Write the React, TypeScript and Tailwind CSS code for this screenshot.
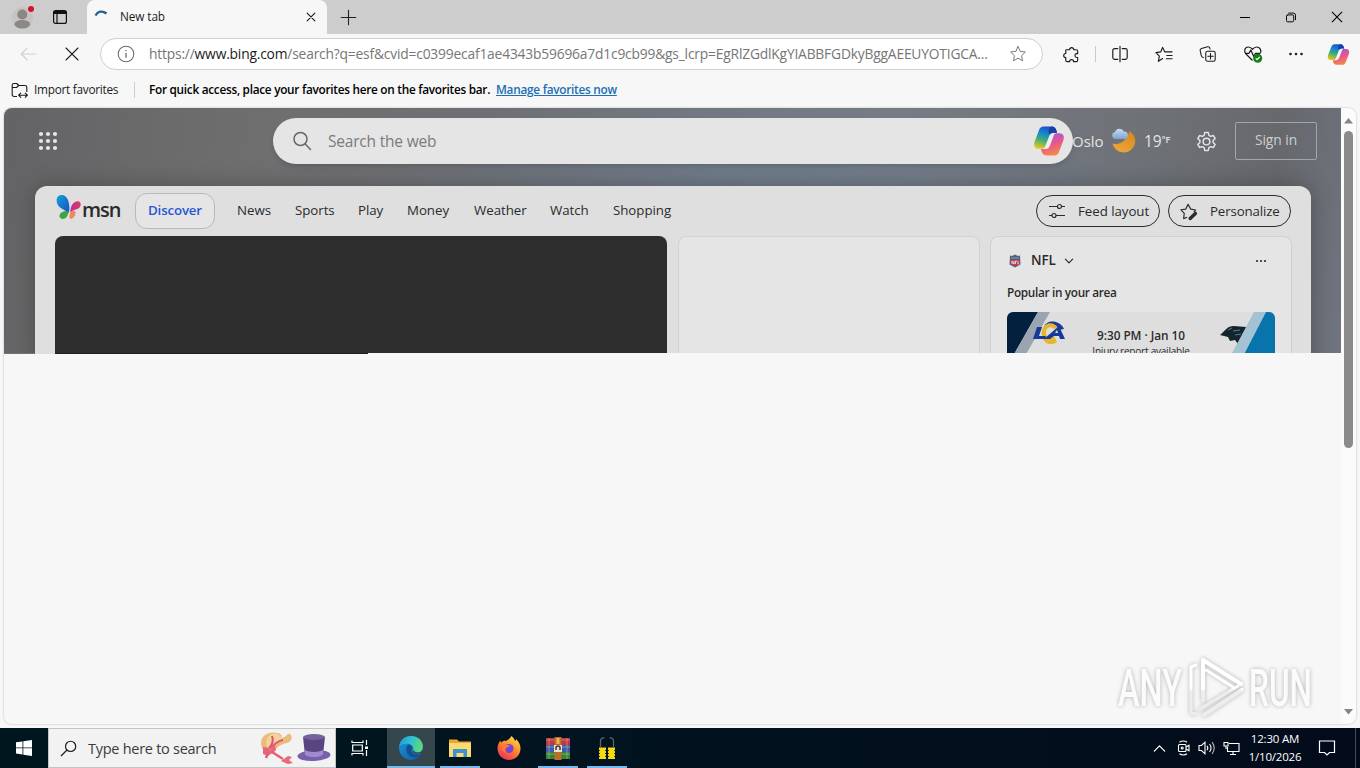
import type { ReactNode } from "react";

type IconProps = { d: string; size?: number; className?: string; width?: number };

// 20x20 outline icon
function Icon({ d, size = 20, className = "", width = 1.1 }: IconProps) {
    return (
        <svg
            width={size}
            height={size}
            viewBox="0 0 20 20"
            fill="none"
            stroke="currentColor"
            strokeWidth={width}
            strokeLinecap="round"
            strokeLinejoin="round"
            className={`shrink-0 ${className}`}
        >
            <path d={d} />
        </svg>
    );
}

const STAR = "M10 1.800l2.500 5.200 5.700.8-4.200 4 1 5.700-5-2.800-5 2.800 1-5.700-4.200-4 5.700-.8z";

function Copilot({ id, size, gap }: { id: string; size: number; gap: string }) {
    const ribbon =
        "M18 6C17.400 2.700 16 1.200 14.2 1.2H8C6.200 1.200 5 2.400 4.400 4.200L1.200 12.500C.2 15.500 1.300 17.800 4 17.800h3.400c1.900 0 2.700-1.100 3.300-2.900L13.300 8c.5-1.400 1.200-2 2.600-2z";
    return (
        <svg width={size} height={size} viewBox="0 0 24 24" className="shrink-0">
            <defs>
                <linearGradient id={`${id}a`} x1="0.6" y1="0" x2="0.3" y2="1">
                    <stop offset="0" stopColor="#1b50c4" />
                    <stop offset="0.3" stopColor="#1581d0" />
                    <stop offset="0.62" stopColor="#3fae78" />
                    <stop offset="1" stopColor="#e9c61c" />
                </linearGradient>
                <linearGradient id={`${id}b`} x1="0.7" y1="1" x2="0.4" y2="0">
                    <stop offset="0" stopColor="#9a5be0" />
                    <stop offset="0.5" stopColor="#e8578a" />
                    <stop offset="1" stopColor="#f58b45" />
                </linearGradient>
            </defs>
            <path d={ribbon} fill={`url(#${id}a)`} />
            <path d={ribbon} fill={`url(#${id}b)`} transform="rotate(180 12 12)" />
            <path d="M13 7.500c.5-1.200 1.300-1.700 2.600-1.700H18c-.6-3-1.700-4.600-3.800-4.600-1.300 0-2.200 1.800-2.700 4z" fill="#173fa8" />
            <path d="M11.900 9C12.500 7 13.500 6 15.500 6h2.300C16 6.300 15.700 7.300 15.200 8.800L12.700 15.500C12 17.300 11 18 9 18H6.500c1.800-.3 2.400-1.200 2.900-2.600z" fill={gap} />
        </svg>
    );
}

function TitleBar() {
    return (
        <div className="h-[34px] shrink-0 bg-[#cdcdcd] flex items-stretch">
            <div className="w-[87px] flex items-center pl-3 bg-[#cdcdcd]">
                <svg width="22" height="26" viewBox="0 0 22 26">
                    <circle cx="10.500" cy="13.500" r="10.500" fill="#c6c3c0" />
                    <circle cx="10.300" cy="10.500" r="5" fill="#8b8784" />
                    <ellipse cx="10.300" cy="20.200" rx="7.800" ry="4.200" fill="#8b8784" />
                    <circle cx="19" cy="5" r="3" fill="#d3122b" />
                </svg>
                <svg width="16" height="16" viewBox="0 0 16 16" fill="none" stroke="#111" strokeWidth="1.2" className="ml-[18px]">
                    <rect x="1.600" y="1.600" width="12.800" height="12.800" rx="2" />
                    <path d="M1.600 3.500h12.800" strokeWidth="3" />
                    <path d="M5 4v10.400" />
                </svg>
            </div>
            <div className="w-[240px] bg-[#f7f7f7] rounded-t-lg flex items-center">
                <svg width="16" height="16" viewBox="0 0 16 16" fill="none" className="ml-[6px]">
                    <path d="M2.500 6.500C4.600 2.500 9 1 13.500 4.500" stroke="#1f5f97" strokeWidth="2.300" />
                </svg>
                <span className="ml-[11px] text-[11.8px] text-[#1c1c1c] w-[180px] tracking-[-0.1px]">New tab</span>
                <Icon d="M4.500 4.500l11 11M15.500 4.500l-11 11" size={14} width={1.7} className="ml-1 text-[#222]" />
            </div>
            <div className="w-[43px] flex items-center justify-center">
                <Icon d="M10 1.500v17M1.500 10h17" size={17} width={1.3} className="text-[#222]" />
            </div>
            <div className="ml-auto flex text-black">
                <div className="w-[46px] flex items-center justify-center">
                    <div className="w-[10px] h-px bg-black" />
                </div>
                <div className="w-[46px] flex items-center justify-center">
                    <Icon d="M5 6.500h7.500a2 2 0 0 1 2 2V16a2 2 0 0 1-2 2H4.500a2 2 0 0 1-2-2V8.500a2 2 0 0 1 2-2zM6 3.500h8a3.500 3.500 0 0 1 3.500 3.500v7.500" size={12} width={1.6} />
                </div>
                <div className="w-[46px] flex items-center justify-center">
                    <Icon d="M2 2l16 16M18 2L2 18" size={12} width={1.8} />
                </div>
            </div>
        </div>
    );
}

function ToolCell({ children }: { children: ReactNode }) {
    return <div className="w-11 flex items-center justify-center text-[#1b1b1b]">{children}</div>;
}

function Toolbar() {
    return (
        <div className="h-10 shrink-0 flex items-center">
            <div className="w-[56px] flex justify-center">
                <Icon d="M18 10H2.500M9 3.500L2.500 10 9 16.500" size={18} className="text-[#cfcfcf]" width={1.3} />
            </div>
            <div className="w-[32px] flex justify-center">
                <Icon d="M4 4l12 12M16 4L4 16" size={20} className="text-[#222]" width={1.1} />
            </div>
            <div className="ml-3 w-[943px] h-8 rounded-full bg-white border border-[#cfcfcf] flex items-center">
                <svg width="18" height="18" viewBox="0 0 18 18" fill="none" stroke="#6e6e6e" strokeWidth="1.100" className="ml-4 shrink-0">
                    <circle cx="9" cy="9" r="7.800" />
                    <path d="M9 8v4.800M9 5v1.300" strokeWidth="1.300" />
                </svg>
                <div className="ml-[14px] w-[846px] pt-px whitespace-nowrap text-[13.8px] tracking-[-0.182px] text-[#767676]">
                    https://<span className="text-[#1b1b1b]">www.bing.com</span>/search?q=esf&amp;cvid=c0399ecaf1ae4343b59696a7d1c9cb99&amp;gs_lcrp=EgRlZGdlKgYIABBFGDkyBggAEEUYOTIGCA...
                </div>
                <Icon d={STAR} size={18} className="ml-[14px] text-[#777]" />
            </div>
            <div className="ml-[6px] flex items-center">
                <ToolCell>
                    <Icon d="M4.500 5H8a2.200 2.200 0 1 1 4.400 0H15a1.500 1.500 0 0 1 1.500 1.500v2.600h-.9a2 2 0 1 0 0 4h.9V16a1.500 1.500 0 0 1-1.500 1.500h-2.800a2.100 2.100 0 0 0-4.200 0H5.500A1.500 1.500 0 0 1 4 16v-2.700a2.200 2.200 0 1 1 0-4.400V5.500z" size={19} width={1.2} className="ml-px" />
                </ToolCell>
                <div className="ml-[2px] mr-[2px] w-px h-4 bg-[#c9c9c9]" />
                <ToolCell>
                    <Icon d="M10 1.500v17M7.500 4H4a2 2 0 0 0-2 2v8a2 2 0 0 0 2 2h3.500M12.500 4H16a2 2 0 0 1 2 2v8a2 2 0 0 1-2 2h-3.500" size={18} width={1.3} />
                </ToolCell>
                <ToolCell>
                    <Icon d="M8 14.300l-4.500 2.900 1.100-5.400L1 8l5-.7L8 2.500l2.200 4.700H18M12.500 11H18M12 14.500h6" size={19} width={1.2} />
                </ToolCell>
                <ToolCell>
                    <Icon d="M7.500 9a2 2 0 0 1 2-2H16a2 2 0 0 1 2 2v7a2 2 0 0 1-2 2H9.500a2 2 0 0 1-2-2zM12.800 9.500v6M9.800 12.500h6M5 13.800L4 13.500C3 13 2.800 12.600 2.500 11.500L1.300 6.300C1 5 1.500 4.200 2.800 3.800L9.500 2c1.300-.3 2.200.2 2.600 1.500l.3.900" size={18} width={1.2} />
                </ToolCell>
                <ToolCell>
                    <svg width="20" height="20" viewBox="0 0 20 20" fill="none" stroke="currentColor" strokeWidth="1.200" strokeLinejoin="round" className="ml-[2px]">
                        <path d="M9.500 16.500L3 10C.5 7.200 1.700 3 5.300 3c2 0 3.300 1 4.200 2.300C10.500 4 11.800 3 13.700 3c3.200 0 4.800 3 3.800 5.800" />
                        <path d="M2 9.300h4L7.800 6l3 6.500 1.700-3.200h5" />
                        <circle cx="14.700" cy="14.200" r="4.500" fill="#16801d" stroke="none" />
                        <path d="M12.700 14.300l1.400 1.400 2.600-2.800" stroke="#fff" />
                    </svg>
                </ToolCell>
                <ToolCell>
                    <svg width="16" height="4" viewBox="0 0 16 4" fill="currentColor">
                        <circle cx="2.500" cy="2" r="1.300" />
                        <circle cx="8" cy="2" r="1.300" />
                        <circle cx="13.500" cy="2" r="1.300" />
                    </svg>
                </ToolCell>
                <div className="w-10 flex justify-center">
                    <Copilot id="tool" size={23} gap="#f7f7f7" />
                </div>
            </div>
        </div>
    );
}

function FavoritesBar() {
    return (
        <div className="h-[34px] shrink-0 flex items-center pb-[2px] text-[11.8px] text-[#1b1b1b] whitespace-nowrap">
            <svg width="17" height="17" viewBox="0 0 17 17" fill="none" stroke="#1b1b1b" strokeWidth="1.100" strokeLinejoin="round" className="ml-[11px] shrink-0">
                <path d="M6 14.500H3a1.800 1.800 0 0 1-1.800-1.800V3.300c0-1 .8-1.800 1.800-1.800h2.800l2 2H14c1 0 1.800.8 1.800 1.800V10M1.200 5.500h4.300l2.300-2" />
                <path d="M7.500 13.200h9M10 10.800l-2.400 2.400 2.400 2.400M14 10.800l2.400 2.400L14 15.600" />
            </svg>
            <span className="ml-[6px] w-[100px] tracking-[-0.26px]">Import favorites</span>
            <div className="w-px h-4 bg-[#cfcfcf]" />
            <span className="ml-[14px] w-[347px] font-semibold tracking-[-0.275px] text-black">
                For quick access, place your favorites here on the favorites bar.
            </span>
            <span className="font-semibold tracking-[-0.26px] text-[#1a6fb5] underline">Manage favorites now</span>
        </div>
    );
}

function PageHeader() {
    return (
        <div className="h-[66px] flex items-center text-[#e4e4e4]">
            <svg width="20" height="20" viewBox="0 0 20 20" fill="#e6e6e6" className="ml-[34px]">
                {[3, 10, 17].map((y) =>
                    [3, 10, 17].map((x) => <circle key={`${x}-${y}`} cx={x} cy={y} r="2.100" />)
                )}
            </svg>
            <div className="ml-[215px] w-[800px] h-[46px] shrink-0 rounded-full bg-[#e5e5e5] shadow-md flex items-center">
                <Icon d="M8.500 1.500a6.500 6.500 0 1 1 0 13 6.500 6.500 0 0 1 0-13zM13.200 13l5.300 5.500" size={20} width={1.5} className="ml-[19px] text-[#666]" />
                <span className="ml-4 w-[705px] pt-[2px] text-[15.5px] tracking-[-0.2px] text-[#7b7b7b]">Search the web</span>
                <Copilot id="search" size={32} gap="#eeeeee" />
            </div>
            <span className="w-[39px] shrink-0 text-[15px] whitespace-nowrap ml-[-1px]">Oslo</span>
            <svg width="26" height="26" viewBox="0 0 26 26" className="shrink-0">
                <defs>
                    <linearGradient id="moon" x1="0.800" y1="0" x2="0.300" y2="1">
                        <stop offset="0" stopColor="#d9861c" />
                        <stop offset="1" stopColor="#eba738" />
                    </linearGradient>
                    <linearGradient id="cloud" x1="0" y1="0" x2="0" y2="1">
                        <stop offset="0" stopColor="#c8dcf2" />
                        <stop offset="1" stopColor="#7ea4d1" />
                    </linearGradient>
                </defs>
                <path d="M18.500 3A11.500 11.500 0 1 1 1.500 15.500C9 18 16 12 18.500 3z" fill="url(#moon)" />
                <path d="M4.500 11a3.500 3.500 0 0 1-.6-6.900A5 5 0 0 1 13 3.500a3.800 3.800 0 0 1 1 7.500z" fill="url(#cloud)" />
            </svg>
            <span className="ml-[7px] w-[30px] pt-px flex items-start whitespace-nowrap text-[15.5px]">
                19<span className="text-[9px] font-semibold mt-[3px] tracking-[-0.2px]">°F</span>
            </span>
            <Icon
                d="M10 6.800a3.200 3.200 0 1 1 0 6.400 3.200 3.200 0 0 1 0-6.400zM8.300 1.500h3.400l.6 2.600 1.700 1 2.600-.8 1.700 2.900-2 1.900v1.800l2 1.900-1.700 2.900-2.600-.8-1.700 1-.6 2.600H8.300l-.6-2.600-1.700-1-2.600.8-1.700-2.900 2-1.900V9.100l-2-1.900 1.700-2.900 2.600.8 1.700-1z"
                size={21}
                width={1.4}
                className="ml-[22px]"
            />
            <div className="ml-[18px] w-[82px] h-[38px] shrink-0 border border-[#a2a5a9] rounded-[2px] flex items-center justify-center text-[13.8px] tracking-[-0.05px] pb-px whitespace-nowrap text-[#cfcfcf]">
                Sign in
            </div>
        </div>
    );
}

function MsnLogo() {
    return (
        <div className="w-[66px] flex items-start">
            <svg width="26" height="26" viewBox="0 0 26 26">
                <defs>
                    <linearGradient id="wingBlue" x1="0" y1="0" x2="1" y2="1">
                        <stop offset="0" stopColor="#12a0d8" />
                        <stop offset="1" stopColor="#1c4fc4" />
                    </linearGradient>
                    <linearGradient id="wingPink" x1="1" y1="0" x2="0" y2="1">
                        <stop offset="0" stopColor="#dd4055" />
                        <stop offset="1" stopColor="#b524b4" />
                    </linearGradient>
                </defs>
                <path d="M12.800 19C14.500 12 12.500 1 6 1 1.500 1-.2 4.500 1 9c1.500 5.500 7 6 11.800 10z" fill="url(#wingBlue)" />
                <path d="M12.500 17C8 16.500 3 18.500 3.500 22.500c.5 3.500 8.500 4.500 9-5.500z" fill="#3fa544" />
                <path d="M14.500 19C14 11 18 7 22 7.200c3.500.3 3.300 4.800 1.300 6.500-2.500 2-6.800 1.800-8.800 5.300z" fill="url(#wingPink)" />
                <path d="M14.500 18.500c2-3.500 5.500-2.300 5 1-.5 3.500-3.500 6-5.300 5.300-1.500-.8-.5-4.500.3-6.300z" fill="#f0885c" />
            </svg>
            <span className="mt-[3px] text-[20px] leading-[26px] font-semibold tracking-[-1px] text-[#2a2a2a]">msn</span>
        </div>
    );
}

function PanelNav() {
    return (
        <div className="h-[50px] flex items-center text-[13.3px] text-[#2b2b2b] whitespace-nowrap">
            <div className="ml-[21px] mt-[-5px]">
                <MsnLogo />
            </div>
            <div className="ml-[13px] w-[80px] h-9 shrink-0 rounded-xl border border-[#b9b9b9] bg-[#e5e5e5] flex items-center justify-center font-semibold tracking-[-0.15px] text-[#2457d6]">
                Discover
            </div>
            <div className="ml-[22px] flex w-[799px] tracking-[-0.05px]">
                <span className="w-[58px]">News</span>
                <span className="w-[63px]">Sports</span>
                <span className="w-[49px]">Play</span>
                <span className="w-[67px]">Money</span>
                <span className="w-[76px]">Weather</span>
                <span className="w-[63px]">Watch</span>
                <span>Shopping</span>
            </div>
            <div className="w-[124px] h-8 shrink-0 rounded-full border border-[#2b2b2b] flex items-center">
                <svg width="18" height="16" viewBox="0 0 18 16" fill="none" stroke="#2b2b2b" strokeWidth="1.200" className="ml-[11px]">
                    <path d="M1 3.500h8.500M13.500 3.500H17M1 12.500h3M8 12.500h9" />
                    <circle cx="11.500" cy="3.500" r="2" />
                    <circle cx="6" cy="12.500" r="2" />
                </svg>
                <span className="ml-[12px] pt-px tracking-[-0.05px]">Feed layout</span>
            </div>
            <div className="ml-2 w-[123px] h-8 shrink-0 rounded-full border border-[#2b2b2b] flex items-center">
                <svg width="19" height="19" viewBox="0 0 20 20" fill="none" stroke="#2b2b2b" strokeWidth="1.200" strokeLinejoin="round" className="ml-[11px]">
                    <path d="M7.500 16l-3.700 1.500.7-5.500L1 8.200l5-.7 2.500-5 2.800 5 5.200.9-2 2.200" />
                    <path d="M10.700 17.300l5.500-5.300" strokeWidth="3.600" strokeLinecap="round" />
                </svg>
                <span className="ml-[11px] pt-px tracking-[-0.15px]">Personalize</span>
            </div>
        </div>
    );
}

function NflCard() {
    return (
        <div className="ml-[10px] w-[302px] shrink-0 rounded-t-lg bg-[#e5e5e5] border border-b-0 border-[#d0d0d0] px-[16px] text-[#2b2b2b]">
            <div className="h-[47px] flex items-center">
                <svg width="16" height="14" viewBox="0 0 16 14">
                    <path d="M3 1.500l2 .5 3-1.500L11 2l2-.5.5 9L8 13.500l-5.500-3z" fill="#50617f" />
                    <path d="M3.500 6h9v4L8 12.300 3.500 10z" fill="#c53b55" />
                    <path d="M5 10V7l2 3V7M8.500 10V7H10M11 7v3h1" stroke="#eee" strokeWidth=".8" fill="none" />
                    <path d="M4.500 4h7" stroke="#cdd3df" strokeDasharray="1 1" />
                </svg>
                <span className="ml-2 w-[31px] text-[13.5px] font-semibold tracking-[-0.1px]">NFL</span>
                <Icon d="M4 7l6 6 6-6" size={12} width={2} className="ml-px" />
                <svg width="12" height="4" viewBox="0 0 12 4" fill="#2b2b2b" className="ml-auto mr-[8px]">
                    <circle cx="2" cy="2" r="1.100" />
                    <circle cx="6" cy="2" r="1.100" />
                    <circle cx="10" cy="2" r="1.100" />
                </svg>
            </div>
            <div className="h-[28px] text-[11.8px] leading-4 font-semibold tracking-[-0.33px]">Popular in your area</div>
            <div className="w-[268px] h-[60px] rounded-t-md bg-[#dedede] overflow-hidden flex justify-between">
                <svg width="60" height="60" viewBox="0 0 60 60">
                    <path d="M0 0h31L-3 60z" fill="#04203f" />
                    <path d="M31 0h12L9 60H-3z" fill="#9aa5b1" />
                    <path d="M37 15C39 8 52 7 57 17l-5 1c-4-5-9-6-15-3z" fill="#17399a" />
                    <path d="M35 18c2-8 12-9 16-2l-4 1c-3-3-7-2-8 2-1 5 3 8 8 5l3 6c-8 6-17-1-15-12z" fill="#e5b62e" />
                    <path d="M30 15h5l-3 9h7l-1 3H26zM37 27l15-13 6 13h-5l-1-3h-5l-4 3zM48 21h3l-1-3z" fill="#17399a" />
                </svg>
                <div className="pt-[15px] text-center whitespace-nowrap">
                    <div className="text-[11.8px] leading-4 font-semibold tracking-[-0.03px]">9:30 PM · Jan 10</div>
                    <div className="text-[10px] leading-[14px] pt-px tracking-[-0.22px]">Injury report available</div>
                </div>
                <svg width="60" height="60" viewBox="0 0 60 60">
                    <path d="M5 23c6-5 7-9 14-9l12 1c2 4-1 9-3 13l-5 4-3-4-5 1-2-4z" fill="#15242d" />
                    <path d="M18 19l7-1M20 23l6-1M13 18l4-2" stroke="#4b7f99" strokeWidth="1" />
                    <path d="M39 0h12L21 60H7z" fill="#a3c2d3" />
                    <path d="M51 0h9v60H20z" fill="#0973ab" />
                </svg>
            </div>
        </div>
    );
}

function NewTabPage() {
    return (
        <div className="w-[1337px] shrink-0 bg-[#f7f7f7]">
            <div className="h-[245px] overflow-hidden bg-[radial-gradient(ellipse_420px_60px_at_780px_70px,rgba(108,126,150,0.45),transparent),linear-gradient(100deg,#636365_0%,#6f6e6f_18%,#6e7075_36%,#737a84_55%,#767b83_66%,#6f7277_82%,#66686c_93%,#6f7580_100%)]">
                <PageHeader />
                <div className="mt-3 ml-[31px] w-[1276px] h-[200px] rounded-t-xl bg-[#dfdfdf] shadow-[0_0_22px_rgba(0,0,0,0.25)]">
                    <PanelNav />
                    <div className="ml-5 h-[150px] flex">
                        <div className="w-[612px] shrink-0 rounded-t-lg bg-[#2e2e2e]" />
                        <div className="ml-[11px] w-[302px] shrink-0 rounded-t-lg border border-b-0 border-[#d3d3d3] bg-[#e5e5e5]" />
                        <NflCard />
                    </div>
                </div>
            </div>
            {/* last painted scanline of the partly loaded page */}
            <div className="h-px flex">
                <div className="w-[31px] bg-[#737277]" />
                <div className="w-5 bg-[#dfdfdf]" />
                <div className="w-[313px] bg-[#241b1f]" />
            </div>
        </div>
    );
}

function Watermark() {
    return (
        <svg width="200" height="70" viewBox="0 0 200 70" className="absolute left-[1112px] top-[547px]">
            <defs>
                <linearGradient id="mark" gradientUnits="userSpaceOnUse" x1="0" y1="0" x2="0" y2="70">
                    <stop offset="0.480" stopColor="#ffffff" />
                    <stop offset="0.520" stopColor="#ededed" />
                </linearGradient>
            </defs>
            <g
                fill="#fbfbfb"
                className="drop-shadow-[0_0_2px_rgba(0,0,0,0.28)]"
                fontFamily="'Liberation Sans Narrow', 'Roboto', sans-serif"
            >
                <text transform="translate(2 51) scale(1 1.900)" fontSize="27" fontWeight="500" textLength="64" lengthAdjust="spacingAndGlyphs">ANY</text>
                <text transform="translate(133 51) scale(1 1.900)" fontSize="27" fontWeight="500" textLength="63" lengthAdjust="spacingAndGlyphs">RUN</text>
                <g fill="none" stroke="url(#mark)" strokeWidth="4" strokeLinejoin="round" strokeLinecap="round">
                    <path d="M87 45V5l38 24" />
                    <path d="M80 10l-5 2v46l5 1" strokeWidth="3" />
                    <path d="M90 15l27 17" strokeWidth="3" />
                    <path d="M126 35L88 60" strokeWidth="4" />
                    <path d="M122 31L84 54" strokeWidth="3" />
                </g>
            </g>
        </svg>
    );
}

function TaskCell({ active, open, children }: { active?: boolean; open?: boolean; children: ReactNode }) {
    return (
        <div className={`w-12 h-10 flex flex-col items-center ${active ? "bg-[#35474d]" : ""}`}>
            <div className="h-[38px] flex items-center pt-[2px]">{children}</div>
            {active && <div className="w-12 h-[2px] bg-[#76b9ed]" />}
            {open && <div className="w-10 h-[2px] bg-[#76b9ed]" />}
        </div>
    );
}

function Taskbar() {
    return (
        <div className="mt-auto h-10 shrink-0 flex bg-[linear-gradient(90deg,#00161e,#01141f_40%,#030b1a)] text-white">
            <div className="w-12 flex items-center justify-center">
                <svg width="16" height="16" viewBox="0 0 16 16" fill="#fff">
                    <path d="M0 2.300l6.500-.9v6.100H0zM7.300 1.300L16 0v7.500H7.300zM0 8.300h6.500v6.200L0 13.600zM7.300 8.300H16V16l-8.700-1.300z" />
                </svg>
            </div>
            <div className="w-[288px] bg-[#f2f2f2] border border-[#c4c4c4] flex items-center">
                <Icon d="M12.500 1.500a6 6 0 1 1 0 12 6 6 0 0 1 0-12zM8.200 11.800L1.500 18.500" size={17} width={1.4} className="ml-[11px] text-[#1b1b1b]" />
                <span className="ml-[11px] w-[172px] pt-px text-[14.5px] tracking-[-0.27px] whitespace-nowrap text-[#3b3b3b]">Type here to search</span>
                <svg width="34" height="34" viewBox="0 0 34 34" className="shrink-0">
                    <path d="M1 12C1 4 10 0 17 2c3 0 5 2 5 5 4-1 6-5 8-4 3 2 2 8-3 9-6 1-10 4-14 9-5 4-12-2-12-9z" fill="#e8bd7c" />
                    <path d="M10 4c5-3 10-1 12 3-4 5-9 9-14 10C5 13 6 7 10 4z" fill="#f3d3a0" />
                    <path d="M12 5c2 5 0 9-3 12M23 9c-5 1-9 4-12 9" stroke="#e0566c" strokeWidth="2" fill="none" />
                    <path d="M3 16l6 1 3 5-4 3-5-2zM10 17l5-3 1 5-4 4z" fill="#e8657a" />
                    <path d="M12 21l11 7M8 22l-2 5" stroke="#e2607a" strokeWidth="2.500" />
                    <path d="M21 30l7-5 4 1-3 3 4 3-5 1-5-2z" fill="#ea6a7c" />
                </svg>
                <svg width="34" height="30" viewBox="0 0 34 30" className="ml-[3px] shrink-0">
                    <ellipse cx="17" cy="22.500" rx="16.500" ry="5.500" fill="#7761ad" transform="rotate(-3 17 23)" />
                    <path d="M6 4c7 3 16 3 22 0l-2 18c-5 3-13 3-18 0z" fill="#594681" />
                    <ellipse cx="17" cy="4" rx="11" ry="3" fill="#75639c" />
                    <path d="M7.500 17c6 2.500 13 2.500 19 0l-.5 5c-5 3-13 3-18 0z" fill="#a18bd0" />
                </svg>
            </div>
            <div className="w-12 flex items-center justify-center">
                <svg width="18" height="18" viewBox="0 0 18 18" fill="none" stroke="#fff" strokeWidth="1.200">
                    <path d="M1 1.500v2h11v-2M1 16.500v-2h11v2M1.700 6h9.600v6H1.700zM15.500 1v5M15.500 11v6" />
                    <path d="M14 7.500h3v2.500h-3z" fill="#fff" stroke="none" />
                </svg>
            </div>
            <div className="ml-[3px] flex gap-px">
                <TaskCell active>
                    <svg width="26" height="26" viewBox="0 0 24 24">
                        <defs>
                            <linearGradient id="edgeTop" x1="0" y1="0.300" x2="1" y2="0.500">
                                <stop offset="0" stopColor="#219fde" />
                                <stop offset="0.500" stopColor="#35c1cb" />
                                <stop offset="1" stopColor="#5ddd73" />
                            </linearGradient>
                            <linearGradient id="edgeLow" x1="0" y1="0" x2="1" y2="1">
                                <stop offset="0" stopColor="#1897e0" />
                                <stop offset="1" stopColor="#14589f" />
                            </linearGradient>
                        </defs>
                        <circle cx="12" cy="12" r="11" fill="url(#edgeLow)" />
                        <path d="M1 11C2 4 7 1 12 1c7 0 11 5 11 9.500 0 4-3 6-6 6-2.500 0-4-1-3.500-2 1.500-2 .5-5.500-3-6C6 7.500 2.500 9 1 11z" fill="url(#edgeTop)" />
                        <path d="M10 8.500c-4 2-3 11 4 12 3 .5 6-.5 7.500-2.500-3 .8-6 .5-8-1.500-2-2.500 0-4-.5-6z" fill="#14508f" />
                        <path d="M14 14c-1 2 1 3 4 3h5v-3c-2 2.500-6 3-9 0z" fill="#35474d" />
                    </svg>
                </TaskCell>
                <TaskCell open>
                    <svg width="22" height="20" viewBox="0 0 22 20">
                        <path d="M0 1.500h8l2 2H22V19H0z" fill="#f0a72b" />
                        <path d="M0 5h22v14H0z" fill="#fbd974" />
                        <path d="M4 11h14v8h-3.500v-4h-7v4H4z" fill="#3d93cd" />
                    </svg>
                </TaskCell>
                <TaskCell>
                    <svg width="24" height="24" viewBox="0 0 24 24">
                        <defs>
                            <linearGradient id="fox" x1="0.800" y1="0" x2="0.200" y2="1">
                                <stop offset="0" stopColor="#ffe14a" />
                                <stop offset="0.450" stopColor="#ff8a2a" />
                                <stop offset="1" stopColor="#f0275d" />
                            </linearGradient>
                        </defs>
                        <path d="M14.500 0c2 1.500 3 3.500 3.500 5 1-.5 1-1.500 1-2 3 3 4.500 6 4.500 9.500C23.500 19 18.500 24 12 24S.5 19 .5 12.500C.5 9 2 6.500 3.300 4.500c.2 1 .5 1.700 1 2C6 4.500 7.500 4.500 9 5c2-1 4-2.500 5.500-5z" fill="url(#fox)" />
                        <circle cx="12" cy="12.500" r="4.600" fill="#7445d8" />
                        <path d="M5 9c3-1 5 .5 8 .3-1 2-3 1.700-4.500 3.500-.8 1 .2 3 2 3.700C6 16.500 4 13 5 9z" fill="#ff7a35" />
                    </svg>
                </TaskCell>
                <TaskCell open>
                    <svg width="24" height="23" viewBox="0 0 24 23">
                        <path d="M0 1h24v7H0z" fill="#c03349" />
                        <path d="M0 8h24v7H0z" fill="#385bb5" />
                        <path d="M0 15h24v7H0z" fill="#32853c" />
                        <path d="M0 3h24M0 10h24M0 17h24M3 1v21M21 1v21" stroke="#d7c282" strokeOpacity=".5" />
                        <path d="M8.500 0h7v23h-7z" fill="#bb6f26" />
                        <path d="M8 8h8v7H8z" fill="#e9e1cb" />
                        <path d="M10 13v-2a2 2 0 0 1 4 0v2" fill="none" stroke="#433" strokeWidth="1.500" />
                        <path d="M12 1v6" stroke="#f1b25a" strokeWidth="3" />
                    </svg>
                </TaskCell>
                <TaskCell open>
                    <svg width="18" height="24" viewBox="0 0 18 24">
                        <path d="M2.500 11V5a3 3 0 0 1 4-3M11.500 2a3 3 0 0 1 4 3v6" fill="none" stroke="#59676c" strokeWidth="1.300" />
                        <path d="M1 11.500h7V23H1zM10 11.500h7V23h-7z" fill="#f5da12" />
                        <path d="M1 14.500h1M1 17.500h1M1 20.500h1M7 14.500h1M7 17.500h1M7 20.500h1M10 14.500h1M10 17.500h1M10 20.500h1M16 14.500h1M16 17.500h1M16 20.500h1" stroke="#3c3509" />
                    </svg>
                </TaskCell>
            </div>
            <div className="ml-auto flex items-center">
                <div className="w-6 flex justify-center">
                    <Icon d="M2 14l8-8 8 8" size={13} width={1.9} />
                </div>
                <div className="w-6 flex justify-center">
                    <svg width="14" height="16" viewBox="0 0 14 16" fill="none" stroke="#fff" strokeWidth="1.100" className="ml-px">
                        <rect x="1.500" y="4.500" width="7.500" height="7" rx="1" />
                        <path d="M9 7l3-1.700v5.400L9 9M2.500 2.200C4.500.6 8 .6 10 2.200M2.500 13.800c2 1.600 5.500 1.600 7.500 0" />
                        <circle cx="5.200" cy="8" r="1" />
                    </svg>
                </div>
                <div className="w-6 flex justify-center">
                    <svg width="18" height="16" viewBox="0 0 18 16" fill="none" stroke="#fff" strokeWidth="1.100">
                        <path d="M1 5.500h2.500L7 2.200v11.600l-3.500-3.300H1zM9 5.800c1 1.300 1 3.100 0 4.400M11.500 4c1.900 2.400 1.900 5.600 0 8" />
                        <path d="M14 2.200c2.700 3.500 2.700 8.100 0 11.600" strokeOpacity=".7" />
                    </svg>
                </div>
                <div className="w-6 flex justify-center">
                    <svg width="17" height="15" viewBox="0 0 17 15" fill="none" stroke="#fff" strokeWidth="1.100">
                        <path d="M6 2.500h10v8H4.500V6M10 10.500v3M7 13.500h6M1 1.500h4V5H1zM3 5v3" />
                    </svg>
                </div>
                <div className="w-16 text-center text-[11.5px] leading-[18px] tracking-[-0.2px] whitespace-nowrap">
                    <div>12:30 AM</div>
                    <div>1/10/2026</div>
                </div>
                <div className="w-[40px] flex justify-center">
                    <svg width="18" height="18" viewBox="0 0 18 18" fill="none" stroke="#fff" strokeWidth="1.200">
                        <path d="M1.500 2h15v11.500h-5L9 16l-2.500-2.500h-5z" />
                    </svg>
                </div>
                <div className="ml-2 mr-[4px] w-px h-10 bg-[#464c58]" />
            </div>
        </div>
    );
}

export default function App() {
    return (
        <div className="w-[1360px] h-[768px] overflow-hidden flex flex-col bg-[#f7f7f7] font-['Open_Sans','Noto_Sans',sans-serif]">
            <TitleBar />
            <Toolbar />
            <FavoritesBar />
            <div className="relative mx-1 h-[616px] shrink-0 flex rounded-lg overflow-hidden bg-[#f7f7f7] shadow-[0_0_2px_rgba(0,0,0,0.3)]">
                <NewTabPage />
                <div className="w-[15px] bg-[#fbfbfb] flex flex-col items-center">
                    <svg width="9" height="6" viewBox="0 0 9 6" fill="#858585" className="mt-[10px]">
                        <path d="M4.500 0L9 5.500H0z" />
                    </svg>
                    <div className="mt-[7px] w-[9px] h-[317px] rounded-full bg-[#8b8b8b]" />
                    <svg width="9" height="6" viewBox="0 0 9 6" fill="#858585" className="mt-auto mb-[9px]">
                        <path d="M0 0h9L4.500 5.500z" />
                    </svg>
                </div>
                <Watermark />
            </div>
            <Taskbar />
        </div>
    );
}
